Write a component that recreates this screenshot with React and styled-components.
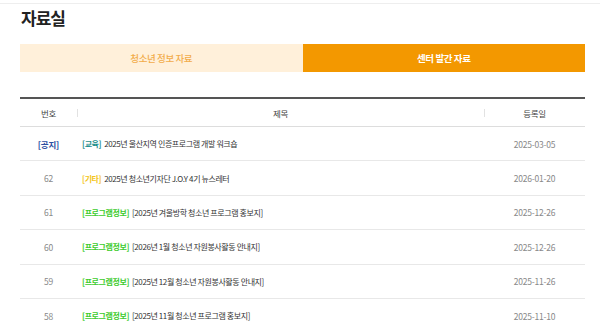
import styled, { createGlobalStyle } from 'styled-components';

const GlobalStyle = createGlobalStyle`
  body {
    margin: 0;
    background: #ffffff;
    font-family: "Noto Sans CJK KR", "Noto Sans", sans-serif;
    color: #333333;
  }
`;

const TopLine = styled.div`
  height: 3px;
  border-bottom: 1px solid #eeeeee;
`;

const Page = styled.div`
  margin: 0 15px 0 20px;
`;

const Title = styled.h1`
  margin: 2px 0 0 1px;
  font-size: 17px;
  line-height: 24px;
  font-weight: 700;
  letter-spacing: -1px;
  color: #222222;
`;

const Tabs = styled.div`
  display: grid;
  grid-template-columns: 1fr 1fr;
  margin-top: 14px;
`;

const Tab = styled.div`
  height: 28px;
  display: flex;
  align-items: center;
  justify-content: center;
  font-size: 9.5px;
  letter-spacing: -0.4px;
  font-weight: ${p => (p.$active ? 700 : 500)};
  background: ${p => (p.$active ? '#f39800' : '#fff0da')};
  color: ${p => (p.$active ? '#ffffff' : '#f2ac4a')};
`;

const Board = styled.div`
  margin-top: 25px;
  border-top: 2px solid #555555;
`;

const Row = styled.div`
  display: grid;
  grid-template-columns: 57px 1fr 101px;
  align-items: center;
  box-sizing: border-box;
  height: ${p => (p.$head ? '28px' : '34.4px')};
  border-bottom: 1px solid ${p => (p.$head ? '#dddddd' : '#e8e8e8')};
  font-size: 8px;
  letter-spacing: -0.4px;
`;

const HeadCell = styled.div`
  position: relative;
  text-align: center;
  color: #444444;
  font-size: 8.5px;
  ${p => p.$sep && `
    &::before {
      content: '';
      position: absolute;
      left: 0;
      top: 50%;
      height: 8px;
      margin-top: -4px;
      border-left: 1px solid #e2e2e2;
    }
  `}
`;

const Num = styled.div`
  text-align: center;
  color: ${p => (p.$notice ? '#2b4ea2' : '#888888')};
  font-weight: ${p => (p.$notice ? 700 : 400)};
  font-size: 8.5px;
  letter-spacing: -0.2px;
`;

const Subject = styled.div`
  padding-left: 5px;
  color: #333333;
  white-space: nowrap;
`;

const Tag = styled.span`
  font-weight: 700;
  color: ${p => p.$color};
  margin-right: 3px;
`;

const DateCell = styled.div`
  text-align: center;
  color: #888888;
  font-size: 8.5px;
  letter-spacing: -0.2px;
`;

const tagColors = {
  '교육': '#1e8f8c',
  '기타': '#f4c51a',
  '프로그램정보': '#3ccb2c',
};

const posts = [
  { num: '[공지]', notice: true, tag: '교육', title: '2025년 울산지역 인증프로그램 개발 워크숍', date: '2025-03-05' },
  { num: '62', tag: '기타', title: '2025년 청소년기자단 J.O.Y 4기 뉴스레터', date: '2026-01-20' },
  { num: '61', tag: '프로그램정보', title: '[2025년 겨울방학 청소년 프로그램 홍보지]', date: '2025-12-26' },
  { num: '60', tag: '프로그램정보', title: '[2026년 1월 청소년 자원봉사활동 안내지]', date: '2025-12-26' },
  { num: '59', tag: '프로그램정보', title: '[2025년 12월 청소년 자원봉사활동 안내지]', date: '2025-11-26' },
  { num: '58', tag: '프로그램정보', title: '[2025년 11월 청소년 프로그램 홍보지]', date: '2025-11-10' },
];

export default function App() {
  return (
    <>
      <GlobalStyle />
      <TopLine />
      <Page>
        <Title>자료실</Title>
        <Tabs>
          <Tab>청소년 정보 자료</Tab>
          <Tab $active>센터 발간 자료</Tab>
        </Tabs>
        <Board>
          <Row $head>
            <HeadCell>번호</HeadCell>
            <HeadCell $sep>제목</HeadCell>
            <HeadCell $sep>등록일</HeadCell>
          </Row>
          {posts.map(post => (
            <Row key={post.num + post.title}>
              <Num $notice={post.notice}>{post.num}</Num>
              <Subject>
                <Tag $color={tagColors[post.tag]}>[{post.tag}]</Tag>
                {post.title}
              </Subject>
              <DateCell>{post.date}</DateCell>
            </Row>
          ))}
        </Board>
      </Page>
    </>
  );
}
